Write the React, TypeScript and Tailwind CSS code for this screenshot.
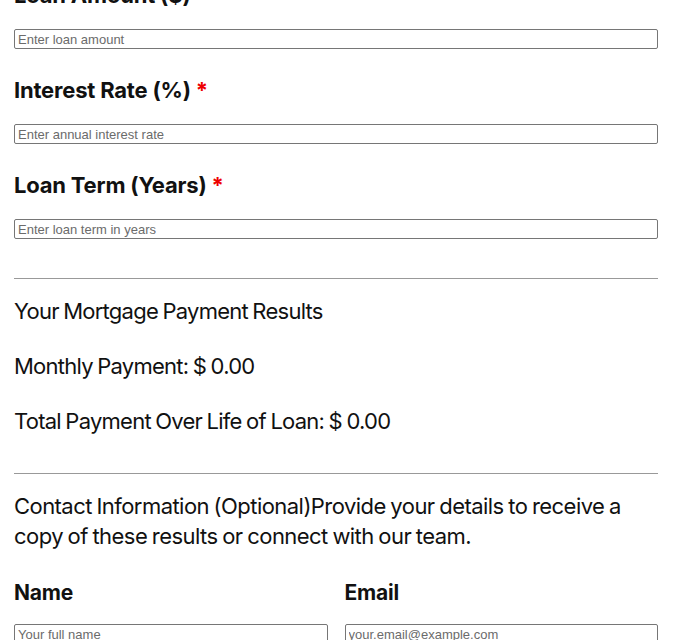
import React from 'react';

const font = { fontFamily: 'Inter, "Noto Sans", sans-serif' };

const inputCls =
  "block w-full h-5 border border-[#767676] rounded-[2px] px-[3px] text-[13px] text-[#111] placeholder:text-[#6b6b6b] [font-family:'Liberation_Sans',Arial,sans-serif]";

// one labelled input field of the calculator
const Field = ({ label, placeholder, first }: { label: string; placeholder: string; first?: boolean }) => (
  <div className={first ? '-mt-[21px]' : 'mt-[25px]'}>
    <label className="block text-[22px] leading-[33px] font-bold text-[#111] tracking-[-0.2px]">
      {label} <span className="text-[#e00]">*</span>
    </label>
    <input type="text" placeholder={placeholder} className={`mt-[17px] ${inputCls}`} />
  </div>
);

const App: React.FC = () => {
  return (
    <div className="bg-white w-[688px] h-[640px] overflow-hidden pl-[14px] pr-[30px] text-[#111]" style={font}>
      <Field label="Loan Amount ($)" placeholder="Enter loan amount" first />
      <Field label="Interest Rate (%)" placeholder="Enter annual interest rate" />
      <Field label="Loan Term (Years)" placeholder="Enter loan term in years" />

      <hr className="mt-[39px] border-t border-[#999]" />
      <div className="mt-[16px] text-[22px] leading-[33px] tracking-[-0.75px] [word-spacing:-1px]">
        Your Mortgage Payment Results
      </div>
      <div className="mt-[22px] text-[22px] leading-[33px] tracking-[-0.75px] [word-spacing:-1px]">
        Monthly Payment: $ 0.00
      </div>
      <div className="mt-[22px] text-[22px] leading-[33px] tracking-[-0.75px] [word-spacing:-1px]">
        Total Payment Over Life of Loan: $ 0.00
      </div>

      <hr className="mt-[35px] border-t border-[#999]" />
      <p className="mt-[17px] text-[22px] leading-[30px] tracking-[-0.55px] [word-spacing:-1px]">
        Contact Information (Optional)Provide your details to receive a copy of these results or connect with our team.
      </p>

      <div className="mt-[25px] grid grid-cols-2 gap-x-[17px]">
        <div>
          <label className="block text-[21px] leading-[33px] font-bold tracking-[-0.2px]">Name</label>
          <input type="text" placeholder="Your full name" className={`mt-[15px] ${inputCls}`} />
        </div>
        <div>
          <label className="block text-[21px] leading-[33px] font-bold tracking-[-0.2px]">Email</label>
          <input type="email" placeholder="your.email@example.com" className={`mt-[15px] ${inputCls}`} />
        </div>
      </div>
    </div>
  );
};

export default App;
